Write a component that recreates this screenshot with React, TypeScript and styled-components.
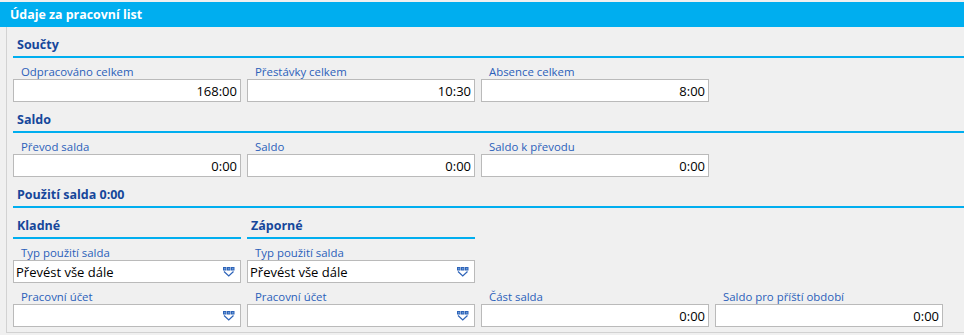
import React from "react";
import styled, { createGlobalStyle } from "styled-components";

const Global = createGlobalStyle`
  html, body { margin: 0; padding: 0; background: #f0f0f0; }
  body { font-family: "Segoe UI", "Open Sans", "Noto Sans", sans-serif; }
`;

const Page = styled.div`
  width: 964px;
  height: 335px;
  padding-top: 2px;
  box-sizing: border-box;
  background: #f0f0f0;
`;

const TitleBar = styled.div`
  height: 25px;
  background: #00aeef;
  color: #ffffff;
  font-weight: 700;
  font-size: 12.4px;
  line-height: 25px;
  padding-left: 10px;
`;

const Body = styled.div`
  margin-left: 6px;
  border-left: 1px solid #d2d2d2;
  border-bottom: 1px solid #d2d2d2;
  padding: 0 0 5px 6px;
`;

const SectionHead = styled.div`
  height: 31px;
  display: flex;
  align-items: flex-end;
  padding: 0 0 3px 4px;
  box-sizing: border-box;
  border-bottom: 2px solid #00aeef;
  color: #16479b;
  font-weight: 700;
  font-size: 12.5px;
  line-height: 16px;
  white-space: nowrap;
`;

const Grid = styled.div`
  display: grid;
  grid-template-columns: repeat(4, 228px);
  column-gap: 6px;
`;

const Field = styled.div`
  display: flex;
  flex-direction: column;
`;

const Label = styled.div`
  padding: 6px 0 0 8px;
  height: 21px;
  box-sizing: border-box;
  line-height: 15px;
  font-size: 11.4px;
  color: #2b60ba;
  white-space: nowrap;
`;

const Box = styled.div<{ $align?: "left" | "right" }>`
  height: 23px;
  box-sizing: border-box;
  border: 1px solid #bababa;
  background: #ffffff;
  display: flex;
  align-items: center;
  justify-content: ${(p) => (p.$align === "left" ? "space-between" : "flex-end")};
  padding: 0 5px 0 2px;
  font-size: 13px;
  color: #000000;
  white-space: nowrap;
`;

const Value = styled.span`
  margin-right: -2px;
`;

const ComboText = styled.span`
  font-size: 13px;
`;

const SubHead = styled(SectionHead)``;

const Spacer = styled.div`
  grid-column: span 2;
`;

const DropIcon = () => (
  <svg width="12" height="10" viewBox="0 0 12 10" aria-hidden="true">
    <rect x="0.5" y="0.5" width="2.5" height="2.5" fill="#6a9ad8" stroke="#2d63b8" strokeWidth="1" />
    <rect x="4.5" y="0.5" width="2.5" height="2.5" fill="#6a9ad8" stroke="#2d63b8" strokeWidth="1" />
    <rect x="8.5" y="0.5" width="2.5" height="2.5" fill="#6a9ad8" stroke="#2d63b8" strokeWidth="1" />
    <polyline points="1,4.5 5.75,9 10.5,4.5" fill="none" stroke="#2d63b8" strokeWidth="1.2" />
  </svg>
);

const NumField = ({ label, value }: { label: string; value: string }) => (
  <Field>
    <Label>{label}</Label>
    <Box>
      <Value>{value}</Value>
    </Box>
  </Field>
);

const ComboField = ({ label, value }: { label: string; value: string }) => (
  <Field>
    <Label>{label}</Label>
    <Box $align="left">
      <ComboText>{value}</ComboText>
      <DropIcon />
    </Box>
  </Field>
);

export default function App() {
  return (
    <>
      <Global />
      <Page>
        <TitleBar>Údaje za pracovní list</TitleBar>
        <Body>
          <SectionHead>Součty</SectionHead>
          <Grid>
            <NumField label="Odpracováno celkem" value="168:00" />
            <NumField label="Přestávky celkem" value="10:30" />
            <NumField label="Absence celkem" value="8:00" />
          </Grid>
          <SectionHead>Saldo</SectionHead>
          <Grid>
            <NumField label="Převod salda" value="0:00" />
            <NumField label="Saldo" value="0:00" />
            <NumField label="Saldo k převodu" value="0:00" />
          </Grid>
          <SectionHead>Použití salda 0:00</SectionHead>
          <Grid>
            <SubHead>Kladné</SubHead>
            <SubHead>Záporné</SubHead>
            <Spacer />
            <ComboField label="Typ použití salda" value="Převést vše dále" />
            <ComboField label="Typ použití salda" value="Převést vše dále" />
            <Spacer />
            <ComboField label="Pracovní účet" value="" />
            <ComboField label="Pracovní účet" value="" />
            <NumField label="Část salda" value="0:00" />
            <NumField label="Saldo pro příští období" value="0:00" />
          </Grid>
        </Body>
      </Page>
    </>
  );
}
